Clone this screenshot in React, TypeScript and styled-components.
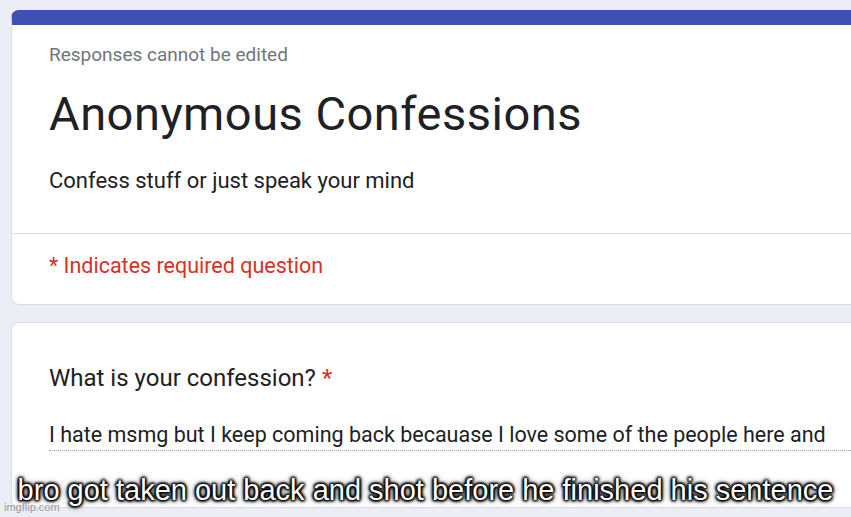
import React from 'react';
import styled, { createGlobalStyle } from 'styled-components';

const GlobalStyle = createGlobalStyle`
  html, body {
    margin: 0;
    padding: 0;
    background: #eceef7;
    overflow: hidden;
  }
  body {
    font-family: Roboto, "Liberation Sans", sans-serif;
    color: #202124;
  }
`;

const Page = styled.div`
  position: relative;
  width: 851px;
  height: 517px;
  overflow: hidden;
  padding: 10px 0 0 11px;
  box-sizing: border-box;
  display: flex;
  flex-direction: column;
  gap: 17px;
`;

const Card = styled.section<{ $accent?: boolean }>`
  width: 880px;
  flex-shrink: 0;
  background: #fff;
  border: 1px solid #dadce0;
  border-radius: 8px;
  box-sizing: border-box;
  overflow: hidden;
  ${({ $accent }) => ($accent ? 'border-top: 15px solid #3f51b5;' : '')}
`;

const Header = styled.div`
  padding: 18px 37px 0;
`;

const Notice = styled.div`
  font-size: 19px;
  line-height: 24px;
  color: #70757a;
`;

const Title = styled.h1`
  margin: 19px 0 0;
  font-weight: 400;
  font-size: 47px;
  line-height: 56px;
  letter-spacing: 0.5px;
`;

const Description = styled.p`
  margin: 24px 0 0;
  font-size: 22px;
  line-height: 30px;
  padding-bottom: 37px;
`;

const Divider = styled.hr`
  margin: 0;
  border: none;
  border-top: 1px solid #dadce0;
`;

const Required = styled.div`
  padding: 18px 37px 24px;
  font-size: 21.5px;
  line-height: 28px;
  color: #d93025;
`;

const Question = styled.div`
  padding: 39px 37px 56px;
`;

const QuestionTitle = styled.div`
  font-size: 24px;
  line-height: 32px;
`;

const Star = styled.span`
  color: #d93025;
`;

const Answer = styled.div`
  margin-top: 27px;
  font-size: 21.5px;
  line-height: 28px;
  width: 802px;
  padding-bottom: 1px;
  border-bottom: 1px dotted #9aa0a6;
  white-space: nowrap;
`;

const Caption = styled.div`
  position: absolute;
  left: 0;
  right: 0;
  top: 473px;
  text-align: center;
  font-family: "Liberation Sans", Arial, sans-serif;
  font-size: 29px;
  line-height: 34px;
  color: #fff;
  text-shadow: 0 0 2px #000, 0 0 3px #000, 1px 1px 3px #000, -1px -1px 3px #000,
    1px -1px 3px #000, -1px 1px 3px #000, 0 0 6px #000;
`;

const Watermark = styled.div`
  position: absolute;
  left: 4px;
  top: 501px;
  font-family: "Liberation Sans", Arial, sans-serif;
  font-size: 11px;
  line-height: 13px;
  color: #999;
`;

export default function App() {
  return (
    <>
      <GlobalStyle />
      <Page>
        <Card $accent>
          <Header>
            <Notice>Responses cannot be edited</Notice>
            <Title>Anonymous Confessions</Title>
            <Description>Confess stuff or just speak your mind</Description>
          </Header>
          <Divider />
          <Required>* Indicates required question</Required>
        </Card>
        <Card>
          <Question>
            <QuestionTitle>
              What is your confession? <Star>*</Star>
            </QuestionTitle>
            <Answer>
              I hate msmg but I keep coming back becauase I love some of the people here and
            </Answer>
          </Question>
        </Card>
        <Caption>bro got taken out back and shot before he finished his sentence</Caption>
        <Watermark>imgflip.com</Watermark>
      </Page>
    </>
  );
}
